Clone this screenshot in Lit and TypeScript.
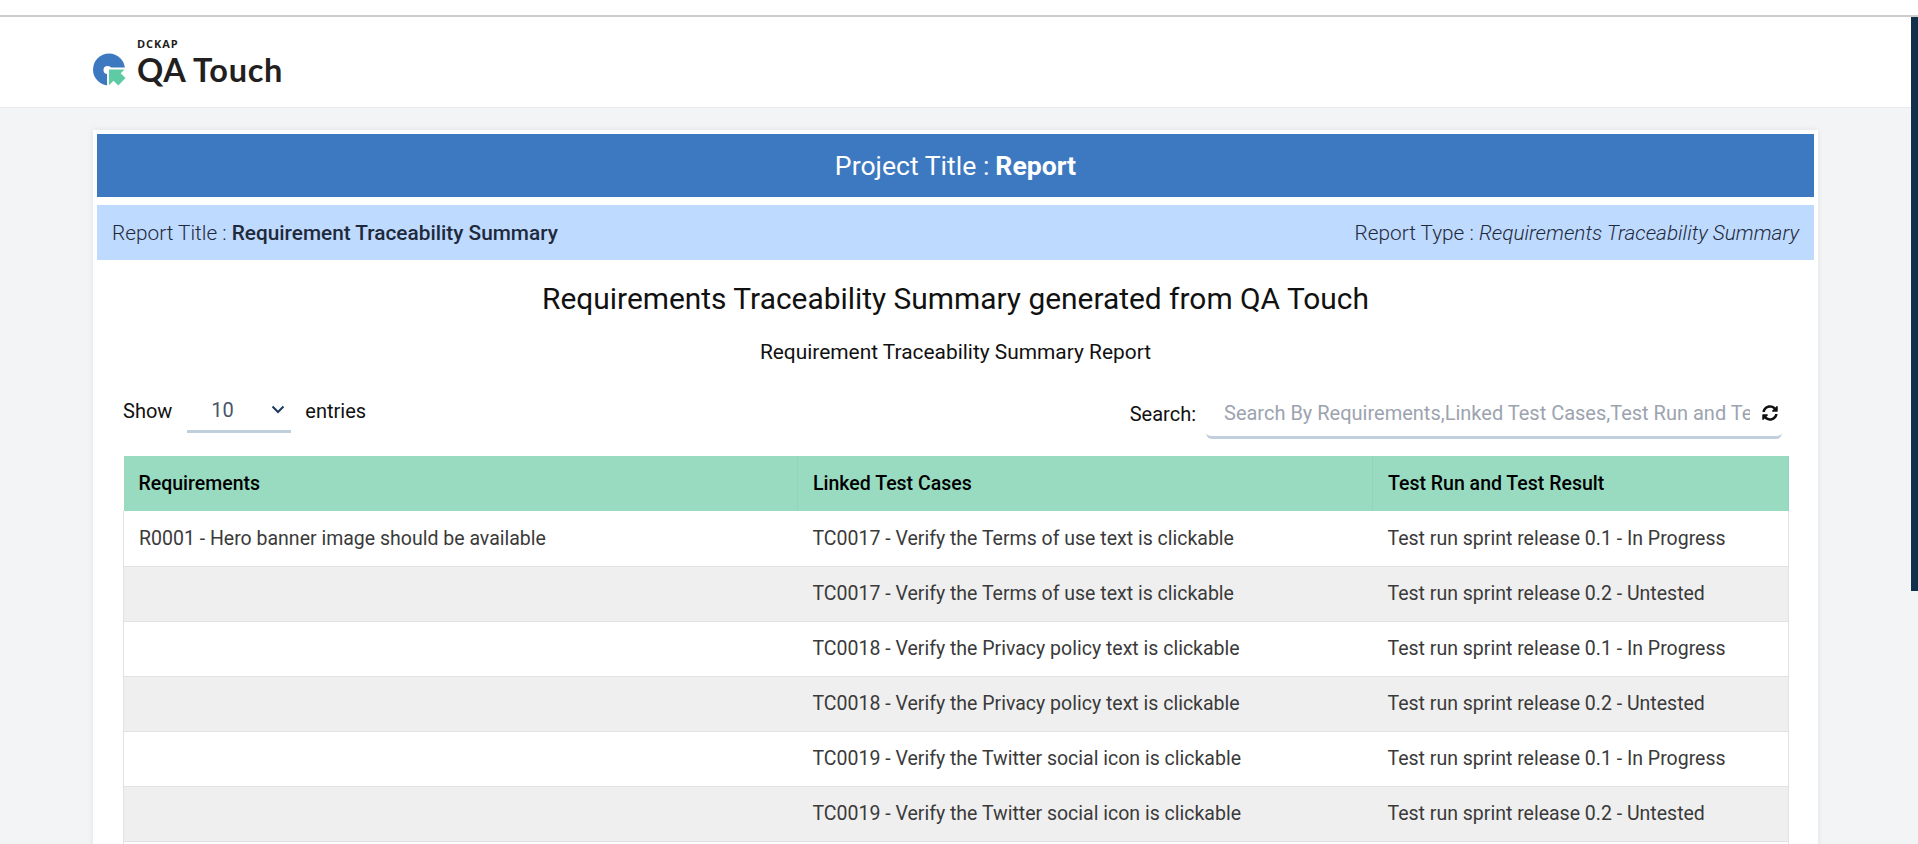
import { LitElement, html, css } from 'lit';
import { customElement } from 'lit/decorators.js';

const ROWS = [
  ['R0001 - Hero banner image should be available', 'TC0017 - Verify the Terms of use text is clickable', 'Test run sprint release 0.1 - In Progress'],
  ['', 'TC0017 - Verify the Terms of use text is clickable', 'Test run sprint release 0.2 - Untested'],
  ['', 'TC0018 - Verify the Privacy policy text is clickable', 'Test run sprint release 0.1 - In Progress'],
  ['', 'TC0018 - Verify the Privacy policy text is clickable', 'Test run sprint release 0.2 - Untested'],
  ['', 'TC0019 - Verify the Twitter social icon is clickable', 'Test run sprint release 0.1 - In Progress'],
  ['', 'TC0019 - Verify the Twitter social icon is clickable', 'Test run sprint release 0.2 - Untested'],
];

@customElement('app-root')
export class AppRoot extends LitElement {
  static styles = css`
    :host {
      display: block;
      height: 844px;
      overflow: hidden;
      background: #f3f4f6;
      font-family: Roboto, "Liberation Sans", sans-serif;
      color: #333;
    }
    .strip {
      height: 15px;
      background: #fff;
      border-bottom: 2px solid #ccc;
    }
    .top {
      height: 90px;
      background: #fff;
      border-bottom: 1px solid #ebebeb;
      padding-left: 93px;
      display: flex;
      align-items: flex-start;
    }
    .logo {
      display: flex;
      align-items: flex-start;
      gap: 11px;
      margin-top: 21px;
    }
    .logo svg {
      display: block;
      margin-top: 15px;
    }
    .brand {
      display: flex;
      flex-direction: column;
      color: #231f20;
    }
    .dckap {
      font: 700 11px/12px "Open Sans", sans-serif;
      letter-spacing: 0.9px;
    }
    .qa {
      font: 700 32.5px/36px Lato, sans-serif;
      letter-spacing: 0.7px;
      margin-top: 2px;
    }
    .scrollbar {
      position: absolute;
      top: 17px;
      right: 0;
      width: 7px;
      height: 574px;
      background: #11304b;
    }
    .card {
      width: 1717px;
      margin: 22px 0 0 93px;
      padding: 4px;
      background: #fff;
      box-shadow: 0 0 6px rgba(0, 0, 0, 0.08);
    }
    .banner {
      height: 63px;
      background: #3d79c0;
      color: #fff;
      display: flex;
      align-items: center;
      justify-content: center;
      font-size: 26.6px;
    }
    .banner b { font-weight: 700; margin-left: 6px; }
    .meta {
      height: 55px;
      margin-top: 8px;
      padding: 0 15px;
      background: #bedaff;
      color: #1e293b;
      display: flex;
      align-items: center;
      justify-content: space-between;
      font-size: 20.8px;
      font-weight: 300;
    }
    .meta b { font-weight: 500; }
    .meta i { font-weight: 300; }
    h1 {
      margin: 21px 0 0;
      text-align: center;
      font-size: 29.9px;
      line-height: 36px;
      font-weight: 400;
      color: #111;
    }
    h2 {
      margin: 21px 0 0;
      text-align: center;
      font-size: 20.9px;
      line-height: 28px;
      font-weight: 400;
      color: #111;
    }
    .controls {
      display: flex;
      justify-content: space-between;
      align-items: flex-start;
      margin: 23px 32px 0 26px;
      height: 67px;
      color: #111;
      font-size: 20px;
    }
    .show {
      display: flex;
      align-items: center;
      height: 44px;
    }
    .select {
      width: 104px;
      height: 44px;
      margin: 0 14px 0 15px;
      border-bottom: 3px solid #c1cedb;
      box-sizing: border-box;
      display: flex;
      align-items: center;
      justify-content: space-between;
      padding: 0 6px 0 24px;
      color: #475569;
    }
    .search {
      display: flex;
      align-items: center;
      gap: 10px;
    }
    .field {
      width: 576px;
      height: 50px;
      box-sizing: border-box;
      border-bottom: 3px solid #c1cedb;
      border-radius: 0 0 6px 6px;
      display: flex;
      align-items: center;
      padding: 0 4px 0 18px;
      gap: 12px;
    }
    .ph {
      flex: 1;
      overflow: hidden;
      white-space: nowrap;
      color: #9ca3af;
    }
    table {
      width: 1666px;
      margin-left: 26px;
      border-collapse: collapse;
      table-layout: fixed;
      font-size: 19.5px;
    }
    th {
      height: 55px;
      padding: 0 15px;
      background: #99dbc1;
      color: #000;
      font-weight: 500;
      text-align: left;
      border-right: 1px solid #92d3b9;
      box-sizing: border-box;
    }
    td {
      height: 55px;
      padding: 0 15px;
      box-sizing: border-box;
      color: #3a3a3a;
      border-bottom: 1px solid #e2e2e2;
      white-space: nowrap;
    }
    td:first-child { border-left: 1px solid #e2e2e2; }
    td:last-child { border-right: 1px solid #e2e2e2; }
    tr:nth-child(even) td { background: #efefef; }
    .c1 { width: 674px; }
    .c2 { width: 575px; }
  `;

  render() {
    return html`
      <div class="strip"></div>
      <div class="top">
        <div class="logo">
          <svg width="33" height="33" viewBox="0 0 33 33">
            <circle cx="16" cy="16.500" r="16" fill="#3d79c0"/>
            <circle cx="14.500" cy="17" r="4" fill="#fff"/>
            <path fill="#fff" d="M14 14.500h19v18.500H14z"/>
            <path fill="#5fcba4" d="M16 16.500h15.500l-3.800 3.800 4.800 4.800-7.200 7.400-4.800-4.800-4.500 4.500z"/>
          </svg>
          <div class="brand">
            <span class="dckap">DCKAP</span>
            <span class="qa">QA Touch</span>
          </div>
        </div>
      </div>
      <div class="scrollbar"></div>
      <div class="card">
        <div class="banner">Project Title : <b>Report</b></div>
        <div class="meta">
          <span>Report Title : <b>Requirement Traceability Summary</b></span>
          <span>Report Type : <i>Requirements Traceability Summary</i></span>
        </div>
        <h1>Requirements Traceability Summary generated from QA Touch</h1>
        <h2>Requirement Traceability Summary Report</h2>
        <div class="controls">
          <div class="show">
            <span>Show</span>
            <div class="select">
              <span>10</span>
              <svg width="14" height="9" viewBox="0 0 14 9"><path d="M1.500 1.500 7 7l5.500-5.500" fill="none" stroke="#1e3a5f" stroke-width="2"/></svg>
            </div>
            <span>entries</span>
          </div>
          <div class="search">
            <span>Search:</span>
            <div class="field">
              <span class="ph">Search By Requirements,Linked Test Cases,Test Run and Test Result</span>
              <svg width="16" height="16" viewBox="0 0 512 512"><path fill="#111" d="M370.700 133.300C339.500 104 298.900 88 255.800 88c-77.500.1-144.300 53.200-162.800 126.900-1.300 5.400-6.100 9.100-11.700 9.100H24.100c-7.500 0-13.200-6.800-11.800-14.200C33.900 94.900 134.800 8 256 8c66.400 0 126.800 26.100 171.300 68.700L463 41c15.100-15.100 41-4.400 41 17V192c0 13.300-10.700 24-24 24H345.900c-21.400 0-32.100-25.900-17-41l41.800-41.700zM32 296h134.100c21.400 0 32.100 25.900 17 41l-41.800 41.800c31.300 29.300 71.800 45.300 114.900 45.200 77.400-.1 144.300-53.100 162.800-126.800 1.300-5.400 6.100-9.100 11.700-9.100h57.300c7.500 0 13.200 6.800 11.800 14.200C478.100 417.100 377.200 504 256 504c-66.400 0-126.800-26.100-171.300-68.700L49 471c-15.100 15.100-41 4.400-41-17V320c0-13.300 10.700-24 24-24z"/></svg>
            </div>
          </div>
        </div>
        <table>
          <thead><tr><th class="c1">Requirements</th><th class="c2">Linked Test Cases</th><th>Test Run and Test Result</th></tr></thead>
          <tbody>
            ${ROWS.map(r => html`<tr>${r.map(c => html`<td>${c}</td>`)}</tr>`)}
            <tr><td></td><td></td><td></td></tr>
          </tbody>
        </table>
      </div>
    `;
  }
}
